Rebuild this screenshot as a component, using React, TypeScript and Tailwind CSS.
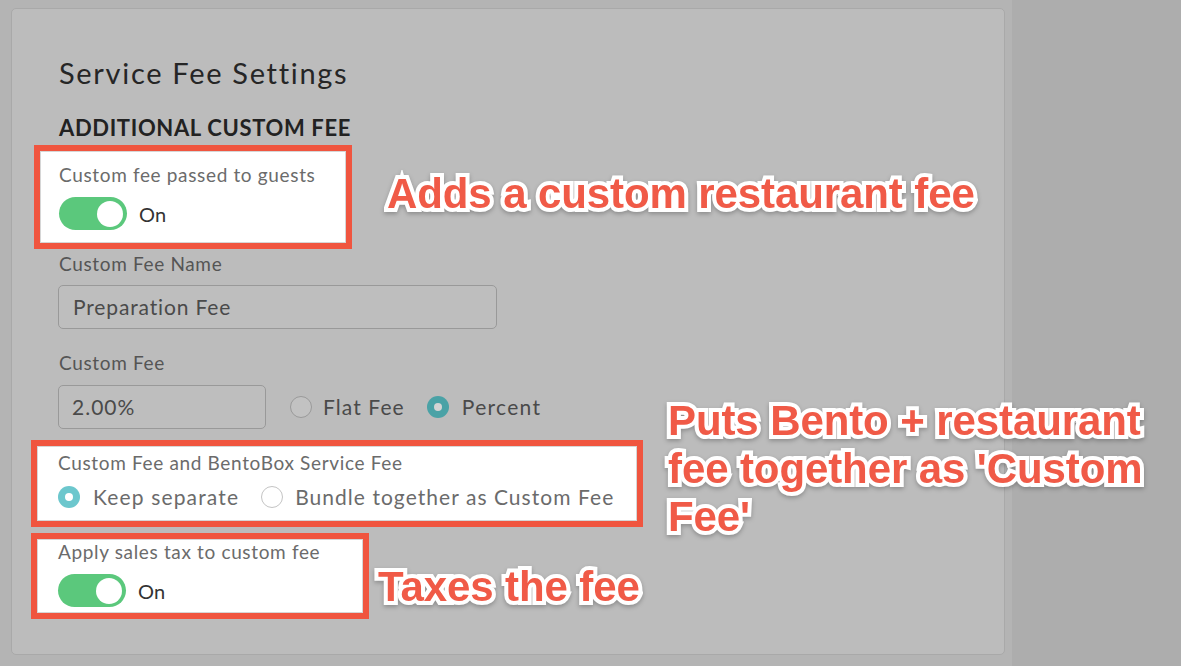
import React from "react";

const ui = { fontFamily: "Lato, 'Noto Sans', sans-serif" };
const ann = { fontFamily: "'Liberation Sans', Arial, sans-serif" };

function Toggle() {
  return (
    <div className="flex items-center h-[33px]">
      <div className="w-[68px] h-[33px] rounded-full bg-[#5bc87c] flex items-center justify-end pr-[4px]">
        <div className="w-[26px] h-[26px] rounded-full bg-white" />
      </div>
      <span className="ml-[12px] text-[20px] leading-[22px] text-[#333] tracking-[0.3px]">On</span>
    </div>
  );
}

function Radio({ checked, dim }: { checked: boolean; dim?: boolean }) {
  if (checked) {
    return (
      <div
        className={`w-[22px] h-[22px] rounded-full flex items-center justify-center ${
          dim ? "bg-[#4aa2a6]" : "bg-[#6cc7cd]"
        }`}
      >
        <div className={`w-[8px] h-[8px] rounded-full ${dim ? "bg-[#d4d4d4]" : "bg-white"}`} />
      </div>
    );
  }
  return (
    <div
      className={`w-[22px] h-[22px] rounded-full border ${
        dim ? "border-[#9a9a9a] bg-[#c2c2c2]" : "border-[#c4c4c4] bg-white"
      }`}
    />
  );
}

const annText =
  "absolute font-bold text-[#f05a47] [-webkit-text-stroke:8px_white] [paint-order:stroke_fill] [filter:drop-shadow(0_2px_2px_rgba(0,0,0,0.25))] whitespace-nowrap text-[42px] leading-[48px] tracking-[-0.1px]";

export default function App() {
  return (
    <div className="relative w-[1181px] h-[666px] flex bg-[#adadad] overflow-hidden" style={ui}>
      <div className="w-[1012px] h-full bg-[#b4b4b4] pt-[8px] pl-[11px]">
        <div className="w-[994px] h-[647px] bg-[#bcbcbc] rounded-[5px] border border-[#a9a9a9] pl-[47px] pt-[48px]">
          <div className="text-[29px] leading-[32px] text-[#262626] tracking-[1.7px]">Service Fee Settings</div>
          <div className="mt-[27px] text-[22px] leading-[24px] font-bold text-[#222] tracking-[0.65px]">
            ADDITIONAL CUSTOM FEE
          </div>

          <div className="mt-[5px] -ml-[25px] w-[318px] h-[104px] border-[6px] border-[#f0553f] bg-white shadow-[inset_0_0_0_1px_#d6d6d6] pl-[19px] pt-[13px]">
            <div className="text-[19px] leading-[22px] text-[#6b6b6b] tracking-[0.65px]">Custom fee passed to guests</div>
            <div className="mt-[11px]">
              <Toggle />
            </div>
          </div>

          <div className="mt-[4px] text-[19px] leading-[22px] text-[#555] tracking-[0.65px]">Custom Fee Name</div>
          <div className="mt-[10px] w-[439px] h-[44px] -ml-[1px] rounded-[5px] border border-[#999] bg-[#bebebe] flex items-center pl-[14px] text-[21px] text-[#4a4a4a] tracking-[0.85px]">
            Preparation Fee
          </div>

          <div className="mt-[23px] text-[19px] leading-[22px] text-[#555] tracking-[0.65px]">Custom Fee</div>
          <div className="mt-[11px] flex items-center h-[44px] -ml-[1px]">
            <div className="w-[208px] h-[44px] rounded-[5px] border border-[#999] bg-[#bebebe] flex items-center pl-[13px] text-[21px] text-[#4a4a4a] tracking-[1px]">
              2.00%
            </div>
            <div className="ml-[24px]">
              <Radio checked={false} dim />
            </div>
            <span className="ml-[11px] text-[21px] text-[#4a4a4a] tracking-[1.1px]">Flat Fee</span>
            <div className="ml-[22px]">
              <Radio checked dim />
            </div>
            <span className="ml-[13px] text-[21px] text-[#4a4a4a] tracking-[1.3px]">Percent</span>
          </div>

          <div className="mt-[11px] -ml-[28px] w-[612px] h-[87px] border-[6px] border-[#f0553f] bg-white shadow-[inset_0_0_0_1px_#d6d6d6] pl-[21px] pt-[6px]">
            <div className="text-[19px] leading-[22px] text-[#6b6b6b] tracking-[0.65px]">Custom Fee and BentoBox Service Fee</div>
            <div className="mt-[10px] flex items-center h-[26px]">
              <Radio checked />
              <span className="ml-[13px] text-[21px] text-[#6b6b6b] tracking-[1.15px]">Keep separate</span>
              <div className="ml-[22px]">
                <Radio checked={false} />
              </div>
              <span className="ml-[12px] text-[21px] text-[#6b6b6b] tracking-[1.05px]">Bundle together as Custom Fee</span>
            </div>
          </div>

          <div className="mt-[6px] -ml-[28px] w-[338px] h-[86px] border-[6px] border-[#f0553f] bg-white shadow-[inset_0_0_0_1px_#d6d6d6] pl-[21px] pt-[2px]">
            <div className="text-[19px] leading-[22px] text-[#6b6b6b] tracking-[0.65px]">Apply sales tax to custom fee</div>
            <div className="mt-[11px]">
              <Toggle />
            </div>
          </div>
        </div>
      </div>
      <div className="flex-1" />

      <div className={annText + " left-[387px] top-[170px]"} style={ann}>
        Adds a custom restaurant fee
      </div>
      <div className={annText + " left-[668px] top-[397px]"} style={ann}>
        Puts Bento + restaurant
        <br />
        fee together as 'Custom
        <br />
        Fee'
      </div>
      <div className={annText + " left-[378px] top-[563px]"} style={ann}>
        Taxes the fee
      </div>
    </div>
  );
}
